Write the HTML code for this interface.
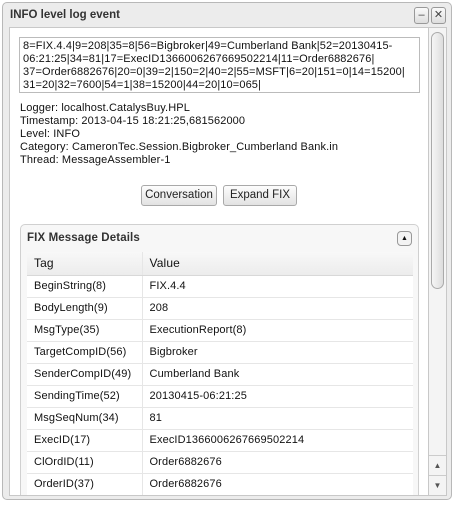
<!DOCTYPE html>
<html><head><style>
*{box-sizing:border-box;margin:0;padding:0}
body{width:455px;height:505px;background:#fff;font-family:"Liberation Sans",sans-serif;font-size:11px;color:#111;position:relative;overflow:hidden}
.win{position:absolute;left:2px;top:2px;width:450px;height:498px;background:#ececec;border:1px solid #b8b8b8;border-radius:5px}
.title{position:absolute;left:7px;top:6px;font-weight:bold;font-size:11.5px;color:#333}
.tb{position:absolute;top:4px;width:15px;height:17px;border:1px solid #999;border-radius:3px;background:linear-gradient(#fafafa,#ddd);font-size:11px;line-height:15px;text-align:center;color:#444}
.content{position:absolute;left:9px;top:27px;width:420px;height:469px;background:#fff;border:1px solid #c8c8c8;overflow:hidden;letter-spacing:0.12px}
.sb{position:absolute;left:428px;top:27px;width:19px;height:469px;background:#f4f4f4;border:1px solid #c8c8c8}
.thumb{position:absolute;left:2px;top:4px;width:13px;height:257px;border:1px solid #aaa;border-radius:7px;background:linear-gradient(90deg,#f6f6f6,#ddd)}
.arr{position:absolute;left:0;width:17px;height:20px;font-size:8px;text-align:center;line-height:20px;color:#555;border-top:1px solid #ccc}
.ta{position:absolute;left:9px;top:9px;width:401px;height:56px;border:1px solid #bbb;padding:2px 3px;line-height:13px;font-size:11px}
.info{position:absolute;left:10px;top:74px;line-height:13px}
.btn{position:absolute;top:157px;height:21px;border:1px solid #a9a9a9;border-radius:3px;background:linear-gradient(#fdfdfd,#e2e2e2);font-size:11.5px;line-height:19px;text-align:center;color:#222;letter-spacing:0}
.panel{position:absolute;left:10px;top:196px;width:399px;height:290px;border:1px solid #d0d0d0;border-radius:5px;background:#f7f7f7}
.ph{position:absolute;left:6px;top:7px;font-weight:bold;font-size:11.5px;color:#333}
.pbtn{position:absolute;right:6px;top:6px;width:15px;height:15px;border:1px solid #999;border-radius:4px;background:#f3f3f3;font-size:7px;text-align:center;line-height:13px}
table{position:absolute;left:6px;top:27px;width:386px;border-collapse:collapse;background:#fff}
td{height:22px;border-bottom:1px solid #e6e6e6;padding-left:7px;font-size:11px}
th{height:23px;background:linear-gradient(#f8f8f8,#ececec);font-weight:normal;text-align:left;padding-left:7px;font-size:12px;border-bottom:1px solid #d8d8d8}
td:first-child,th:first-child{width:115px;border-right:1px solid #e6e6e6}
</style></head><body>
<div class="win">
<div class="title">INFO level log event</div>
<div class="tb" style="left:411px">–</div>
<div class="tb" style="left:428px">✕</div>
</div>
<div class="content">
<div class="ta">8=FIX.4.4|9=208|35=8|56=Bigbroker|49=Cumberland Bank|52=20130415-<br>06:21:25|34=81|17=ExecID1366006267669502214|11=Order6882676|<br>37=Order6882676|20=0|39=2|150=2|40=2|55=MSFT|6=20|151=0|14=15200|<br>31=20|32=7600|54=1|38=15200|44=20|10=065|</div>
<div class="info">Logger: localhost.CatalysBuy.HPL<br>Timestamp: 2013-04-15 18:21:25,681562000<br>Level: INFO<br>Category: CameronTec.Session.Bigbroker_Cumberland Bank.in<br>Thread: MessageAssembler-1</div>
<div class="btn" style="left:131px;width:76px">Conversation</div>
<div class="btn" style="left:213px;width:74px">Expand FIX</div>
<div class="panel">
<div class="ph">FIX Message Details</div>
<div class="pbtn">▲</div>
<table>
<tr><th>Tag</th><th>Value</th></tr>
<tr><td>BeginString(8)</td><td>FIX.4.4</td></tr>
<tr><td>BodyLength(9)</td><td>208</td></tr>
<tr><td>MsgType(35)</td><td>ExecutionReport(8)</td></tr>
<tr><td>TargetCompID(56)</td><td>Bigbroker</td></tr>
<tr><td>SenderCompID(49)</td><td>Cumberland Bank</td></tr>
<tr><td>SendingTime(52)</td><td>20130415-06:21:25</td></tr>
<tr><td>MsgSeqNum(34)</td><td>81</td></tr>
<tr><td>ExecID(17)</td><td>ExecID1366006267669502214</td></tr>
<tr><td>ClOrdID(11)</td><td>Order6882676</td></tr>
<tr><td>OrderID(37)</td><td>Order6882676</td></tr>
</table>
</div>
</div>
<div class="sb"><div class="thumb"></div>
<div class="arr" style="top:427px">▲</div><div class="arr" style="top:447px">▼</div></div>
</body></html>
